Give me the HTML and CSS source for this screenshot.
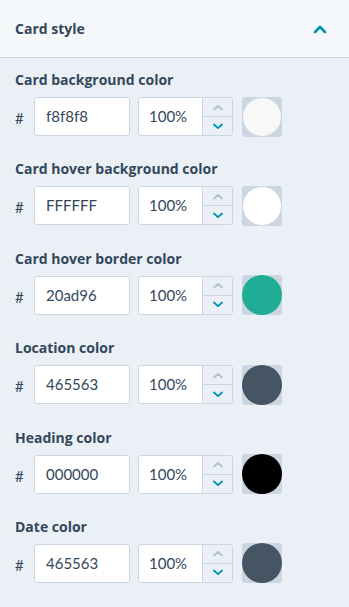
FILE: index.html
```html
<!DOCTYPE html>
<html>
<head>
<meta charset="utf-8">
<link rel="stylesheet" href="styles.css">
</head>
<body>
<div class="panel">
  <div class="header">
    <span class="title">Card style</span>
    <svg class="caret" width="14" height="9" viewBox="0 0 14 9"><path d="M2 7 L7 2 L12 7" fill="none" stroke="#0091ae" stroke-width="2.6" stroke-linecap="round" stroke-linejoin="round"/></svg>
  </div>
  <div class="fields">
    <div class="field">
      <div class="label">Card background color</div>
      <div class="row">
        <span class="hash">#</span>
        <div class="hex">f8f8f8</div>
        <div class="pct"><span class="pct-val">100%</span><div class="stepper"><div class="step up"><svg width="12" height="7" viewBox="0 0 12 7"><path d="M2 5.5 L6 1.8 L10 5.5" fill="none" stroke="#b0c1d4" stroke-width="1.8" stroke-linecap="round" stroke-linejoin="round"/></svg></div><div class="step down"><svg width="12" height="7" viewBox="0 0 12 7"><path d="M2 1.5 L6 5.2 L10 1.5" fill="none" stroke="#0091ae" stroke-width="1.8" stroke-linecap="round" stroke-linejoin="round"/></svg></div></div></div>
        <div class="swatch"><div class="dot" style="background:#f8f8f8"></div></div>
      </div>
    </div>
    <div class="field">
      <div class="label">Card hover background color</div>
      <div class="row">
        <span class="hash">#</span>
        <div class="hex">FFFFFF</div>
        <div class="pct"><span class="pct-val">100%</span><div class="stepper"><div class="step up"><svg width="12" height="7" viewBox="0 0 12 7"><path d="M2 5.5 L6 1.8 L10 5.5" fill="none" stroke="#b0c1d4" stroke-width="1.8" stroke-linecap="round" stroke-linejoin="round"/></svg></div><div class="step down"><svg width="12" height="7" viewBox="0 0 12 7"><path d="M2 1.5 L6 5.2 L10 1.5" fill="none" stroke="#0091ae" stroke-width="1.8" stroke-linecap="round" stroke-linejoin="round"/></svg></div></div></div>
        <div class="swatch"><div class="dot" style="background:#ffffff"></div></div>
      </div>
    </div>
    <div class="field">
      <div class="label">Card hover border color</div>
      <div class="row">
        <span class="hash">#</span>
        <div class="hex">20ad96</div>
        <div class="pct"><span class="pct-val">100%</span><div class="stepper"><div class="step up"><svg width="12" height="7" viewBox="0 0 12 7"><path d="M2 5.5 L6 1.8 L10 5.5" fill="none" stroke="#b0c1d4" stroke-width="1.8" stroke-linecap="round" stroke-linejoin="round"/></svg></div><div class="step down"><svg width="12" height="7" viewBox="0 0 12 7"><path d="M2 1.5 L6 5.2 L10 1.5" fill="none" stroke="#0091ae" stroke-width="1.8" stroke-linecap="round" stroke-linejoin="round"/></svg></div></div></div>
        <div class="swatch"><div class="dot filled" style="background:#20ad96"></div></div>
      </div>
    </div>
    <div class="field">
      <div class="label">Location color</div>
      <div class="row">
        <span class="hash">#</span>
        <div class="hex">465563</div>
        <div class="pct"><span class="pct-val">100%</span><div class="stepper"><div class="step up"><svg width="12" height="7" viewBox="0 0 12 7"><path d="M2 5.5 L6 1.8 L10 5.5" fill="none" stroke="#b0c1d4" stroke-width="1.8" stroke-linecap="round" stroke-linejoin="round"/></svg></div><div class="step down"><svg width="12" height="7" viewBox="0 0 12 7"><path d="M2 1.5 L6 5.2 L10 1.5" fill="none" stroke="#0091ae" stroke-width="1.8" stroke-linecap="round" stroke-linejoin="round"/></svg></div></div></div>
        <div class="swatch"><div class="dot filled" style="background:#465563"></div></div>
      </div>
    </div>
    <div class="field">
      <div class="label">Heading color</div>
      <div class="row">
        <span class="hash">#</span>
        <div class="hex">000000</div>
        <div class="pct"><span class="pct-val">100%</span><div class="stepper"><div class="step up"><svg width="12" height="7" viewBox="0 0 12 7"><path d="M2 5.5 L6 1.8 L10 5.5" fill="none" stroke="#b0c1d4" stroke-width="1.8" stroke-linecap="round" stroke-linejoin="round"/></svg></div><div class="step down"><svg width="12" height="7" viewBox="0 0 12 7"><path d="M2 1.5 L6 5.2 L10 1.5" fill="none" stroke="#0091ae" stroke-width="1.8" stroke-linecap="round" stroke-linejoin="round"/></svg></div></div></div>
        <div class="swatch"><div class="dot filled" style="background:#000000"></div></div>
      </div>
    </div>
    <div class="field">
      <div class="label">Date color</div>
      <div class="row">
        <span class="hash">#</span>
        <div class="hex">465563</div>
        <div class="pct"><span class="pct-val">100%</span><div class="stepper"><div class="step up"><svg width="12" height="7" viewBox="0 0 12 7"><path d="M2 5.5 L6 1.8 L10 5.5" fill="none" stroke="#b0c1d4" stroke-width="1.8" stroke-linecap="round" stroke-linejoin="round"/></svg></div><div class="step down"><svg width="12" height="7" viewBox="0 0 12 7"><path d="M2 1.5 L6 5.2 L10 1.5" fill="none" stroke="#0091ae" stroke-width="1.8" stroke-linecap="round" stroke-linejoin="round"/></svg></div></div></div>
        <div class="swatch"><div class="dot filled" style="background:#465563"></div></div>
      </div>
    </div>
  </div>
</div>
</body>
</html>
```

FILE: styles.css
```css
html, body {
  margin: 0;
  padding: 0;
  background: #eaf0f6;
  height: 100%;
}
body {
  font-family: "Lato", "Open Sans", sans-serif;
  color: #33475b;
}
.panel {
  width: 349px;
}
.header {
  height: 57px;
  background: #f5f8fa;
  border-bottom: 1px solid #cbd6e2;
  display: flex;
  align-items: center;
  justify-content: space-between;
  padding: 0 22px 0 15px;
  box-sizing: content-box;
}
.title {
  font-family: "Open Sans", sans-serif;
  font-weight: 700;
  font-size: 14px;
  line-height: 20px;
  padding-top: 1px;
}
.caret {
  display: block;
  margin-top: 1px;
}
.fields {
  padding: 12px 15px 0 15px;
}
.field {
  margin-bottom: 23.4px;
}
.label {
  font-family: "Open Sans", sans-serif;
  font-weight: 700;
  font-size: 14px;
  line-height: 20px;
  margin-bottom: 7px;
}
.row {
  display: flex;
  align-items: center;
  height: 39px;
}
.hash {
  width: 19px;
  font-size: 15px;
  padding-top: 3px;
}
.hex {
  width: 96px;
  height: 39px;
  box-sizing: border-box;
  background: #fff;
  border: 1px solid #cbd6e2;
  border-radius: 3px;
  font-size: 15px;
  line-height: 37px;
  padding-left: 11px;
  margin-right: 8px;
}
.pct {
  width: 95px;
  height: 39px;
  box-sizing: border-box;
  background: #fff;
  border: 1px solid #cbd6e2;
  border-radius: 3px;
  display: flex;
  margin-right: 9px;
}
.pct-val {
  width: 63px;
  font-size: 15px;
  line-height: 37px;
  padding-left: 10px;
  box-sizing: border-box;
}
.stepper {
  flex: 1;
  display: flex;
  flex-direction: column;
  background: #eaf0f6;
  border-left: 1px solid #cbd6e2;
  border-radius: 0 2px 2px 0;
}
.step {
  flex: 1;
  display: flex;
  align-items: center;
  justify-content: center;
}
.step svg { display: block; }
.step.up {
  border-bottom: 1px solid #cbd6e2;
}
.swatch {
  width: 40px;
  height: 40px;
  background: #cbd6e2;
  border-radius: 3px;
  display: flex;
  align-items: center;
  justify-content: center;
}
.dot {
  width: 40px;
  height: 40px;
  box-sizing: border-box;
  border-radius: 50%;
  border: 1px solid #cbd6e2;
}
.dot.filled {
  border-color: transparent;
}
```
